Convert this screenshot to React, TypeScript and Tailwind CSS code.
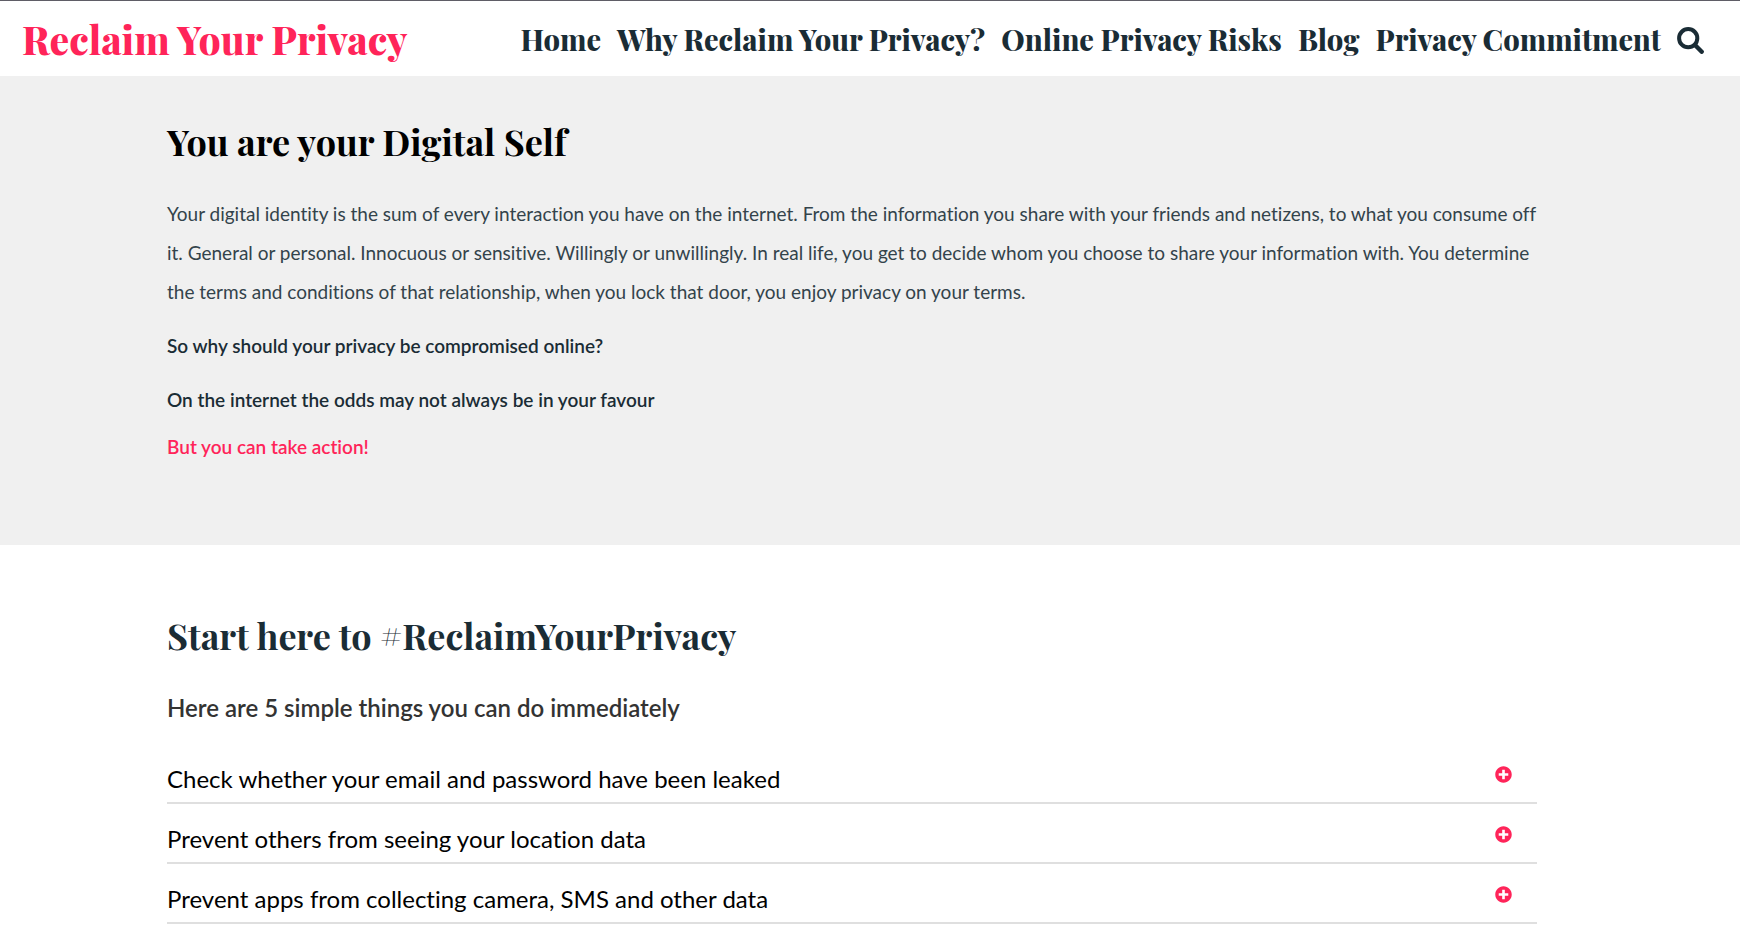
import React from 'react';
import { FaPlusCircle } from 'react-icons/fa';

const navItems = [
    'Home',
    'Why Reclaim Your Privacy?',
    'Online Privacy Risks',
    'Blog',
    'Privacy Commitment'
];

const steps = [
    'Check whether your email and password have been leaked',
    'Prevent others from seeing your location data',
    'Prevent apps from collecting camera, SMS and other data'
];

const SearchIcon: React.FC = () => (
    <svg viewBox="0 0 27 27" className="mt-1 size-[27px]" fill="none" stroke="currentColor" aria-hidden="true">
        <circle cx="11.2" cy="11.2" r="9.1" strokeWidth="4" />
        <path d="M18 18L24.7 24.7" strokeWidth="4.4" strokeLinecap="round" />
    </svg>
);

const Header: React.FC = () => (
    <header className="flex items-center justify-between border-t border-[#5f5d66] bg-white pl-[22px] pr-9 h-[76px] font-['Playfair_Display','Liberation_Serif',serif] font-extrabold">
        <a href="#" className="text-[39px] leading-[48px] text-[#ff2459] whitespace-nowrap">
            Reclaim Your Privacy
        </a>
        <nav className="flex items-center gap-4 text-[29px] leading-10 text-[#1a2c35] whitespace-nowrap">
            {navItems.map(item => (
                <a key={item} href="#">{item}</a>
            ))}
            <button type="button" aria-label="Search">
                <SearchIcon />
            </button>
        </nav>
    </header>
);

const Intro: React.FC = () => (
    <section className="bg-[#f0f0f0] pl-[167px] pr-[203px] pt-10 pb-[79px] text-[19px] leading-[39px] text-[#1a2c35]">
        <h2 className="font-['Playfair_Display','Liberation_Serif',serif] text-4xl leading-[50px] font-bold text-black">
            You are your Digital Self
        </h2>
        <p className="mt-7 text-[#33434b]">
            Your digital identity is the sum of every interaction you have on the internet. From the
            information you share with your friends and netizens, to what you consume off it. General or
            personal. Innocuous or sensitive. Willingly or unwillingly. In real life, you get to decide
            whom you choose to share your information with. You determine the terms and conditions of
            that relationship, when you lock that door, you enjoy privacy on your terms.
        </p>
        <p className="mt-[15px] font-semibold">So why should your privacy be compromised online?</p>
        <p className="mt-[15px] font-semibold">On the internet the odds may not always be in your favour</p>
        <p className="mt-2 font-semibold">
            <a href="#" className="text-[#ff2459]">But you can take action!</a>
        </p>
    </section>
);

const Steps: React.FC = () => (
    <section className="bg-white pl-[167px] pr-[203px] pt-[65px] text-2xl">
        <h2 className="font-['Playfair_Display','Liberation_Serif',serif] text-4xl leading-[50px] font-bold text-[#1a2c35]">
            Start here to #ReclaimYourPrivacy
        </h2>
        <h3 className="mt-[30px] leading-9 font-semibold text-[#333]">Here are 5 simple things you can do immediately</h3>
        <ul className="mt-[18px]">
            {steps.map(step => (
                <li key={step}>
                    <button
                        type="button"
                        className="flex w-full items-start justify-between border-b-2 border-[#dfdfdf] pt-[17px] pr-[25px] pb-[5px] text-left leading-9 text-black"
                    >
                        {step}
                        <FaPlusCircle className="mt-[5px] size-[17px] text-[#ff2459]" />
                    </button>
                </li>
            ))}
        </ul>
    </section>
);

const App: React.FC = () => (
    <div className="min-h-screen bg-white font-['Lato',sans-serif] [font-variant-ligatures:none]">
        <Header />
        <Intro />
        <Steps />
    </div>
);

export default App;
